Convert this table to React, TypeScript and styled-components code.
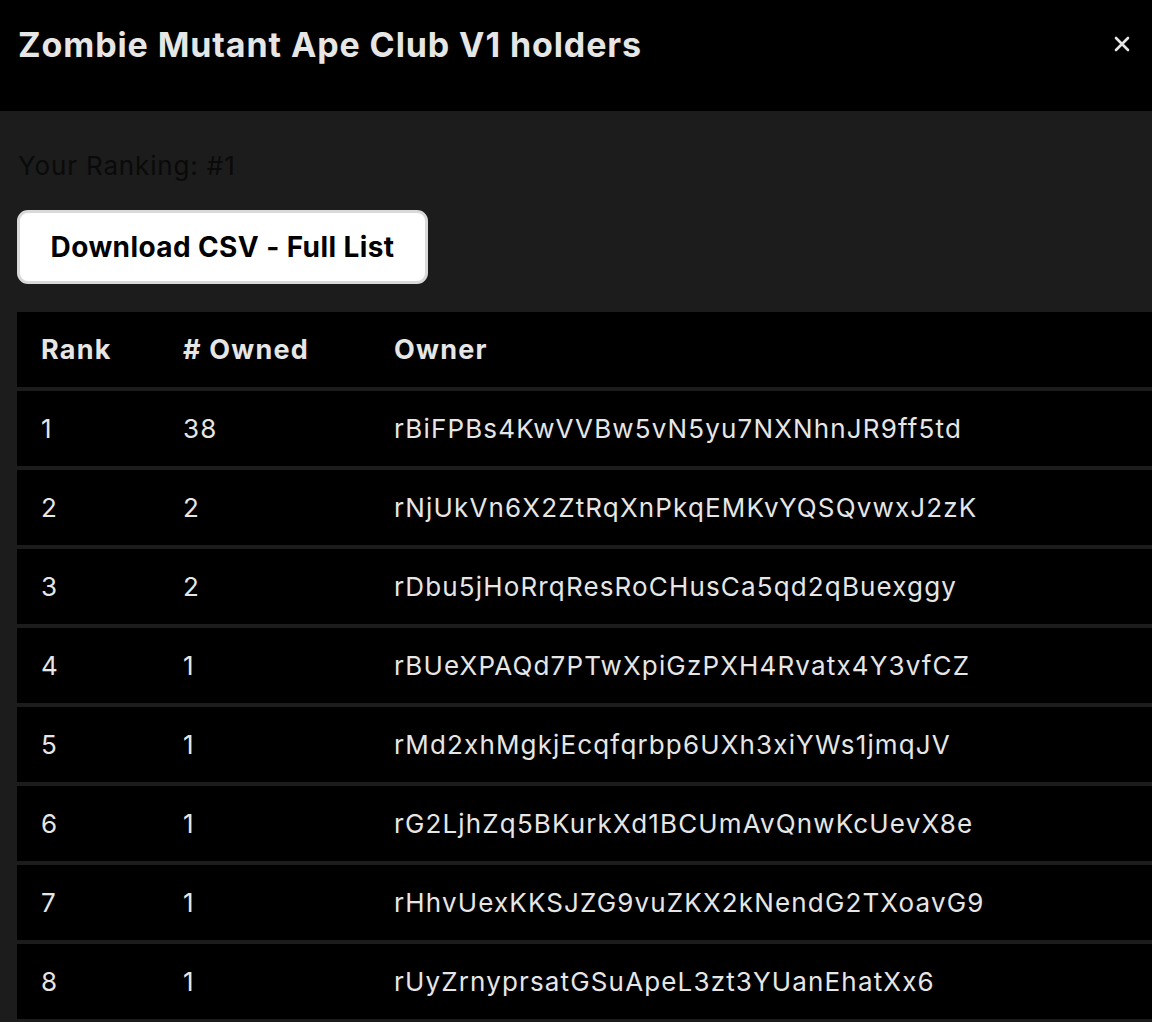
import React from 'react'
import styled, { createGlobalStyle } from 'styled-components'

const holders = [
  { rank: 1, owned: 38, owner: 'rBiFPBs4KwVVBw5vN5yu7NXNhnJR9ff5td' },
  { rank: 2, owned: 2, owner: 'rNjUkVn6X2ZtRqXnPkqEMKvYQSQvwxJ2zK' },
  { rank: 3, owned: 2, owner: 'rDbu5jHoRrqResRoCHusCa5qd2qBuexggy' },
  { rank: 4, owned: 1, owner: 'rBUeXPAQd7PTwXpiGzPXH4Rvatx4Y3vfCZ' },
  { rank: 5, owned: 1, owner: 'rMd2xhMgkjEcqfqrbp6UXh3xiYWs1jmqJV' },
  { rank: 6, owned: 1, owner: 'rG2LjhZq5BKurkXd1BCUmAvQnwKcUevX8e' },
  { rank: 7, owned: 1, owner: 'rHhvUexKKSJZG9vuZKX2kNendG2TXoavG9' },
  { rank: 8, owned: 1, owner: 'rUyZrnyprsatGSuApeL3zt3YUanEhatXx6' },
]

const App = () => {
  return (
    <>
      <GlobalStyle />
      <Modal>
        <Header>
          <Title>Zombie Mutant Ape Club V1 holders</Title>
          <Close aria-label="close">
            <svg width="16" height="16" viewBox="0 0 16 16">
              <path d="M2 2L14 14M14 2L2 14" stroke="#e6e6e6" strokeWidth="2.6" strokeLinecap="round" />
            </svg>
          </Close>
        </Header>
        <Body>
          <Ranking>Your Ranking: #1</Ranking>
          <DownloadButton>Download CSV - Full List</DownloadButton>
          <Table>
            <Row>
              <Cell w={142} head>Rank</Cell>
              <Cell w={211} head># Owned</Cell>
              <Cell head>Owner</Cell>
            </Row>
            {holders.map((h) => (
              <Row key={h.rank}>
                <Cell w={142}>{h.rank}</Cell>
                <Cell w={211}>{h.owned}</Cell>
                <Cell>{h.owner}</Cell>
              </Row>
            ))}
          </Table>
        </Body>
      </Modal>
    </>
  )
}

export default App

const GlobalStyle = createGlobalStyle`
    html, body {
        margin: 0;
        padding: 0;
        background: #1c1c1c;
        font-family: Inter, "Noto Sans", sans-serif;
        overflow: hidden;
    }
`
const Modal = styled.div`
    width: 1152px;
    height: 1022px;
    display: flex;
    flex-direction: column;
    background-color: #1c1c1c;
    overflow: hidden;
`
const Header = styled.div`
    height: 111px;
    flex-shrink: 0;
    background-color: #000;
    display: flex;
    justify-content: space-between;
    align-items: flex-start;
    padding: 0 22px 0 18px;
    box-sizing: border-box;
`
const Title = styled.h2`
    margin: 0;
    margin-top: 23px;
    font-size: 34px;
    line-height: 44px;
    font-weight: 700;
    color: #e6e6e6;
    letter-spacing: 0.9px;
`
const Close = styled.button`
    margin-top: 36px;
    width: 16px;
    height: 16px;
    padding: 0;
    border: none;
    background: transparent;
    display: flex;
    cursor: pointer;
`
const Body = styled.div`
    padding: 0 0 0 17px;
    display: flex;
    flex-direction: column;
    align-items: flex-start;
`
const Ranking = styled.p`
    margin: 0;
    margin-top: 37px;
    margin-left: 1px;
    font-size: 26px;
    line-height: 36px;
    letter-spacing: 0.85px;
    color: #0a0a0a;
`
const DownloadButton = styled.button`
    margin-top: 26px;
    width: 411px;
    height: 74px;
    box-sizing: border-box;
    background-color: #fff;
    border: 3px solid #d9d9d9;
    border-radius: 11px;
    font-family: Inter, "Noto Sans", sans-serif;
    font-size: 28px;
    font-weight: 700;
    letter-spacing: 0.4px;
    color: #000;
    cursor: pointer;
`
const Table = styled.div`
    margin-top: 28px;
    width: 1135px;
    display: flex;
    flex-direction: column;
    gap: 4px;
`
const Row = styled.div`
    height: 75px;
    background-color: #000;
    display: flex;
    align-items: center;
`
const Cell = styled.div<{ w?: number; head?: boolean }>`
    width: ${(p) => (p.w ? `${p.w}px` : 'auto')};
    flex: ${(p) => (p.w ? 'none' : '1')};
    padding-left: 24px;
    box-sizing: border-box;
    font-size: ${(p) => (p.head ? '27px' : '26px')};
    font-weight: ${(p) => (p.head ? 700 : 400)};
    letter-spacing: ${(p) => (p.head ? '1.2px' : '1.15px')};
    color: #e6e6e6;
    white-space: nowrap;
`
